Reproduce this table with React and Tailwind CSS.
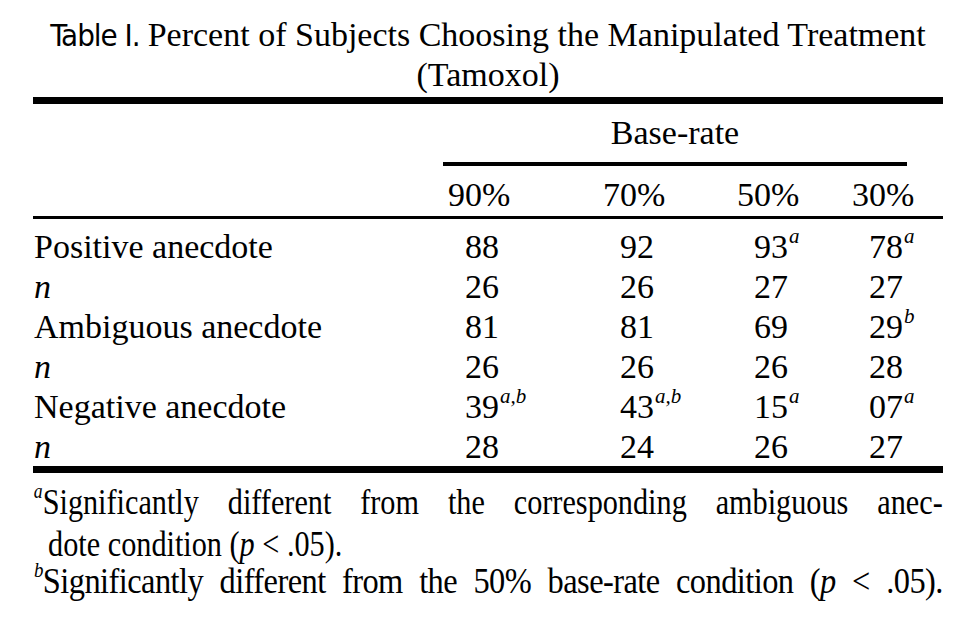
import React from "react";

const serif = { fontFamily: '"Liberation Serif", "Times New Roman", serif' };

function Sup({ children }) {
  return (
    <sup className="italic text-[21px] leading-none relative -top-[3px] align-super ml-[1px]">{children}</sup>
  );
}

const rows = [
  { label: "Positive anecdote", vals: [["88"], ["92"], ["93", "a"], ["78", "a"]] },
  { label: "n", italic: true, vals: [["26"], ["26"], ["27"], ["27"]] },
  { label: "Ambiguous anecdote", vals: [["81"], ["81"], ["69"], ["29", "b"]] },
  { label: "n", italic: true, vals: [["26"], ["26"], ["26"], ["28"]] },
  { label: "Negative anecdote", vals: [["39", "a,b"], ["43", "a,b"], ["15", "a"], ["07", "a"]] },
  { label: "n", italic: true, vals: [["28"], ["24"], ["26"], ["27"]] },
];

const colW = ["w-[155px]", "w-[134px]", "w-[115px]", "w-[91px]"];

export default function App() {
  return (
    <div className="w-[976px] h-[632px] bg-white text-black overflow-hidden" style={serif}>
      <div className="pl-[33px] w-[943px] pt-[15px]">
        {/* Title */}
        <div className="text-center text-[34px] leading-[40px] whitespace-nowrap">
          <span
            className="text-[31px] tracking-[-1px] mr-[8px]"
            style={{ fontFamily: '"Liberation Sans Narrow", "DejaVu Sans Condensed", "Liberation Sans", sans-serif' }}
          >
            Table I.
          </span>
          Percent of Subjects Choosing the Manipulated Treatment
          <br />
          (Tamoxol)
        </div>
        <div className="h-[7px] bg-black mt-[2px]" />

        {/* Base-rate header */}
        <div className="flex">
          <div className="w-[410px]" />
          <div className="w-[464px]">
            <div className="text-center text-[34px] leading-[30px] pt-[14px] pb-[14px]">Base-rate</div>
            <div className="h-[4px] bg-black" />
          </div>
        </div>
        <div className="flex text-[34px] leading-[50px] pt-[4px]">
          <div className="w-[415px]" />
          {["90%", "70%", "50%", "30%"].map((h, i) => (
            <div key={h} className={colW[i]}>{h}</div>
          ))}
        </div>
        <div className="h-[3px] bg-black -mt-[4px]" />

        {/* Body */}
        <div className="pt-[8px]">
          {rows.map((r, ri) => (
            <div key={ri} className="flex text-[34px] leading-[40px]">
              <div className={"w-[415px] pl-[1px] " + (r.italic ? "italic" : "")}>{r.label}</div>
              {r.vals.map((v, i) => (
                <div key={i} className={colW[i] + " pl-[17px] whitespace-nowrap"}>
                  {v[0]}
                  {v[1] && <Sup>{v[1]}</Sup>}
                </div>
              ))}
            </div>
          ))}
        </div>
        <div className="h-[7px] bg-black -mt-[1px]" />

        {/* Footnotes */}
        <div className="text-[36px] leading-[40px] pt-[9px] w-[910px]">
          <div className="w-[1083px] origin-left scale-x-[0.84] text-justify [text-align-last:justify] whitespace-nowrap">
            <Sup>a</Sup>Significantly different from the corresponding ambiguous anec-
          </div>
          <div className="w-[1083px] origin-left scale-x-[0.84] pl-[18px] mt-[2px]">
            dote condition (<span className="italic">p</span> &lt; .05).
          </div>
          <div className="w-[1011px] origin-left scale-x-[0.9] text-justify [text-align-last:justify] whitespace-nowrap tracking-[-0.6px] -mt-[3px]">
            <Sup>b</Sup>Significantly different from the 50% base-rate condition (<span className="italic">p</span> &lt; .05).
          </div>
        </div>
      </div>
    </div>
  );
}
